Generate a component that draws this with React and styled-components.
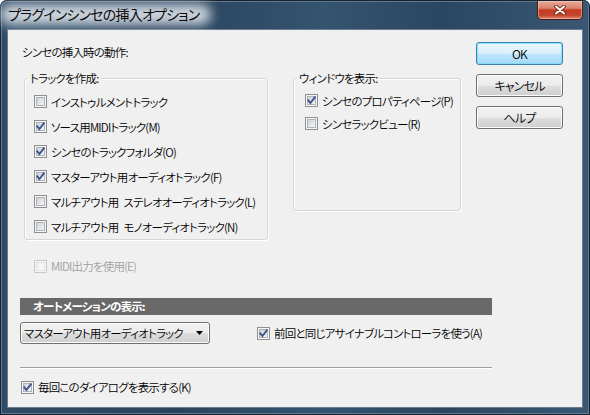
import React from "react";
import styled, { createGlobalStyle } from "styled-components";

const GlobalStyle = createGlobalStyle`
  html, body {
    margin: 0;
    padding: 0;
    background: #fff;
  }
  body {
    font-family: "Noto Sans CJK JP", "Liberation Sans", sans-serif;
    font-feature-settings: "palt" 1;
    font-size: 11.5px;
    letter-spacing: -0.8px;
    font-weight: 350;
    color: #000;
  }
`;

const Window = styled.div`
  width: 590px;
  height: 415px;
  box-sizing: border-box;
  display: flex;
  flex-direction: column;
  padding: 0 7px 7px 7px;
  border-radius: 7px 7px 0 0;
  background: linear-gradient(
    90deg,
    #2f4b66 0%,
    #2a445e 30%,
    #355470 55%,
    #2b4660 75%,
    #3a5874 100%
  );
  box-shadow: inset 0 0 0 1px #15222f, inset 0 0 0 2px #5f7a92;
`;

const TitleBar = styled.div`
  height: 29px;
  display: flex;
  justify-content: space-between;
  align-items: flex-start;
`;

const Title = styled.div`
  position: relative;
  isolation: isolate;
  margin: 4px 0 0 1px;
  font-size: 14px;
  font-weight: 400;
  letter-spacing: -0.8px;
  line-height: 20px;
  color: #0a0a0a;
  white-space: nowrap;

  &::before {
    content: "";
    position: absolute;
    inset: 0 -12px -1px -8px;
    background: rgba(235, 240, 245, 0.85);
    border-radius: 10px;
    filter: blur(6px);
    z-index: -1;
  }
`;

const CloseButton = styled.div`
  width: 46px;
  height: 19px;
  margin-top: 1px;
  box-sizing: border-box;
  display: flex;
  align-items: center;
  justify-content: center;
  border: 1px solid #4a1c16;
  border-top: none;
  border-radius: 0 0 5px 5px;
  background: linear-gradient(
    180deg,
    #e9ab9a 0%,
    #d9826d 40%,
    #c23a20 50%,
    #c4472d 80%,
    #e08d72 100%
  );
  box-shadow: inset 0 0 0 1px rgba(255, 220, 210, 0.45);
`;

const Client = styled.div`
  flex: 1;
  box-sizing: border-box;
  background: #f0f0f0;
  border: 1px solid #687d92;
  padding: 12px 0 0 12px;
  display: flex;
  flex-direction: column;
`;

const TopArea = styled.div`
  display: flex;
  align-items: flex-start;
`;

const Main = styled.div`
  width: 448px;
  display: flex;
  flex-direction: column;
`;

const Heading = styled.div`
  margin: 2px 0 0 2px;
  line-height: 16px;
`;

const GroupRow = styled.div`
  display: flex;
  align-items: flex-start;
  gap: 25px;
  margin: 18px 0 0 4px;
`;

const Group = styled.div`
  position: relative;
  box-sizing: border-box;
  width: ${(p) => p.$width}px;
  height: ${(p) => p.$height}px;
  padding: ${(p) => p.$padTop}px 0 0 ${(p) => p.$padLeft}px;
  border: 1px solid #d3d7da;
  border-radius: 3px;
  box-shadow: inset 1px 1px 0 #fff, 1px 1px 0 #fff;
  display: flex;
  flex-direction: column;
`;

const Legend = styled.span`
  position: absolute;
  top: -9px;
  left: 3px;
  padding: 0 2px;
  line-height: 16px;
  background: #f0f0f0;
`;

const Row = styled.label`
  height: ${(p) => p.$height || 25}px;
  display: flex;
  align-items: center;
  gap: 4px;
  white-space: nowrap;
  color: ${(p) => (p.$disabled ? "#a0a0a0" : "#000")};
`;

const ButtonColumn = styled.div`
  margin-left: 8px;
  display: flex;
  flex-direction: column;
  gap: 9px;
`;

const PushButton = styled.div`
  width: 87px;
  height: 23px;
  box-sizing: border-box;
  display: flex;
  align-items: center;
  justify-content: center;
  border: 1px solid ${(p) => (p.$default ? "#3c7fb1" : "#707070")};
  border-radius: 3px;
  background: ${(p) =>
    p.$default
      ? "linear-gradient(180deg, #eaf6fd 0%, #d9f0fc 50%, #bee6fd 51%, #a7d9f5 100%)"
      : "linear-gradient(180deg, #f2f2f2 0%, #ebebeb 50%, #dddddd 51%, #cfcfcf 100%)"};
  box-shadow: inset 0 0 0 1px
    ${(p) => (p.$default ? "rgba(120, 220, 250, 0.8)" : "#fcfcfc")};
  font-size: 12px;
`;

const MidiRow = styled.div`
  margin: 16px 0 0 14px;
`;

const AutomationBar = styled.div`
  width: 472px;
  height: 17px;
  margin-top: 22px;
  background: #696969;
  color: #fff;
  font-weight: bold;
  line-height: 17px;
  padding-left: 13px;
  box-sizing: border-box;
`;

const AutomationRow = styled.div`
  display: flex;
  align-items: center;
  margin-top: 7px;
  gap: 47px;
`;

const Dropdown = styled.div`
  width: 190px;
  height: 22px;
  box-sizing: border-box;
  display: flex;
  align-items: center;
  justify-content: space-between;
  padding: 0 6px 0 3px;
  border: 1px solid #707070;
  border-radius: 3px;
  background: linear-gradient(180deg, #f2f2f2 0%, #ebebeb 50%, #dddddd 51%, #cfcfcf 100%);
  box-shadow: inset 0 0 0 1px #fcfcfc;
  white-space: nowrap;
`;

const Separator = styled.div`
  width: 472px;
  height: 1px;
  margin-top: 23px;
  background: #a0a0a0;
  box-shadow: 0 1px 0 #fff;
`;

const BottomRow = styled.div`
  margin: 9px 0 0 1px;
`;

function CheckBox({ checked, disabled }) {
  return (
    <svg width="13" height="13" viewBox="0 0 13 13" style={{ flex: "none" }}>
      <defs>
        <linearGradient id="cbFill" x1="0" y1="0" x2="1" y2="1">
          <stop offset="0" stopColor="#cbcfd5" />
          <stop offset="1" stopColor="#f7f7f7" />
        </linearGradient>
        <linearGradient id="cbFillOff" x1="0" y1="0" x2="1" y2="1">
          <stop offset="0" stopColor="#f0f0f0" />
          <stop offset="1" stopColor="#fafafa" />
        </linearGradient>
      </defs>
      <rect
        x="0.5"
        y="0.5"
        width="12"
        height="12"
        fill="#f6f6f6"
        stroke={disabled ? "#c8c8c8" : "#8e8f8f"}
      />
      <rect
        x="2.5"
        y="2.5"
        width="8"
        height="8"
        fill={disabled ? "url(#cbFillOff)" : "url(#cbFill)"}
        stroke={disabled ? "#e2e2e2" : "#aeb3b9"}
      />
      {checked && (
        <path
          d="M3.3 6.4 L5.4 9 L9.8 3.4"
          fill="none"
          stroke="#3d5289"
          strokeWidth="1.9"
          strokeLinecap="square"
        />
      )}
    </svg>
  );
}

function Option({ label, checked, disabled, height }) {
  return (
    <Row $height={height} $disabled={disabled}>
      <CheckBox checked={checked} disabled={disabled} />
      <span>{label}</span>
    </Row>
  );
}

const trackOptions = [
  { label: "インストゥルメントトラック", checked: false },
  { label: "ソース用MIDIトラック(M)", checked: true },
  { label: "シンセのトラックフォルダ(O)", checked: true },
  { label: "マスターアウト用オーディオトラック(F)", checked: true },
  { label: "マルチアウト用\u2002ステレオオーディオトラック(L)", checked: false },
  { label: "マルチアウト用\u2002モノオーディオトラック(N)", checked: false },
];

const windowOptions = [
  { label: "シンセのプロパティページ(P)", checked: true },
  { label: "シンセラックビュー(R)", checked: false },
];

export default function App() {
  return (
    <>
      <GlobalStyle />
      <Window>
        <TitleBar>
          <Title>プラグインシンセの挿入オプション</Title>
          <CloseButton>
            <svg width="12" height="10" viewBox="0 0 12 10">
              <path
                d="M2 1.5 L10 8.5 M10 1.5 L2 8.5"
                stroke="#5a1f14"
                strokeWidth="3.6"
                strokeLinecap="round"
              />
              <path
                d="M2 1.5 L10 8.5 M10 1.5 L2 8.5"
                stroke="#fff"
                strokeWidth="2"
                strokeLinecap="round"
              />
            </svg>
          </CloseButton>
        </TitleBar>
        <Client>
          <TopArea>
            <Main>
              <Heading>シンセの挿入時の動作:</Heading>
              <GroupRow>
                <Group $width={244} $height={162} $padTop={10} $padLeft={9}>
                  <Legend>トラックを作成:</Legend>
                  {trackOptions.map((o) => (
                    <Option key={o.label} label={o.label} checked={o.checked} />
                  ))}
                </Group>
                <Group $width={168} $height={133} $padTop={10} $padLeft={11}>
                  <Legend>ウィンドウを表示:</Legend>
                  {windowOptions.map((o) => (
                    <Option
                      key={o.label}
                      label={o.label}
                      checked={o.checked}
                      height={23}
                    />
                  ))}
                </Group>
              </GroupRow>
            </Main>
            <ButtonColumn>
              <PushButton $default>OK</PushButton>
              <PushButton>キャンセル</PushButton>
              <PushButton>ヘルプ</PushButton>
            </ButtonColumn>
          </TopArea>
          <MidiRow>
            <Option label="MIDI出力を使用(E)" disabled height={20} />
          </MidiRow>
          <AutomationBar>オートメーションの表示:</AutomationBar>
          <AutomationRow>
            <Dropdown>
              <span>マスターアウト用オーディオトラック</span>
              <svg width="7" height="4" viewBox="0 0 7 4">
                <path d="M0 0 H7 L3.5 4 Z" fill="#000" />
              </svg>
            </Dropdown>
            <Option label="前回と同じアサイナブルコントローラを使う(A)" checked height={22} />
          </AutomationRow>
          <Separator />
          <BottomRow>
            <Option label="毎回このダイアログを表示する(K)" checked height={20} />
          </BottomRow>
        </Client>
      </Window>
    </>
  );
}
